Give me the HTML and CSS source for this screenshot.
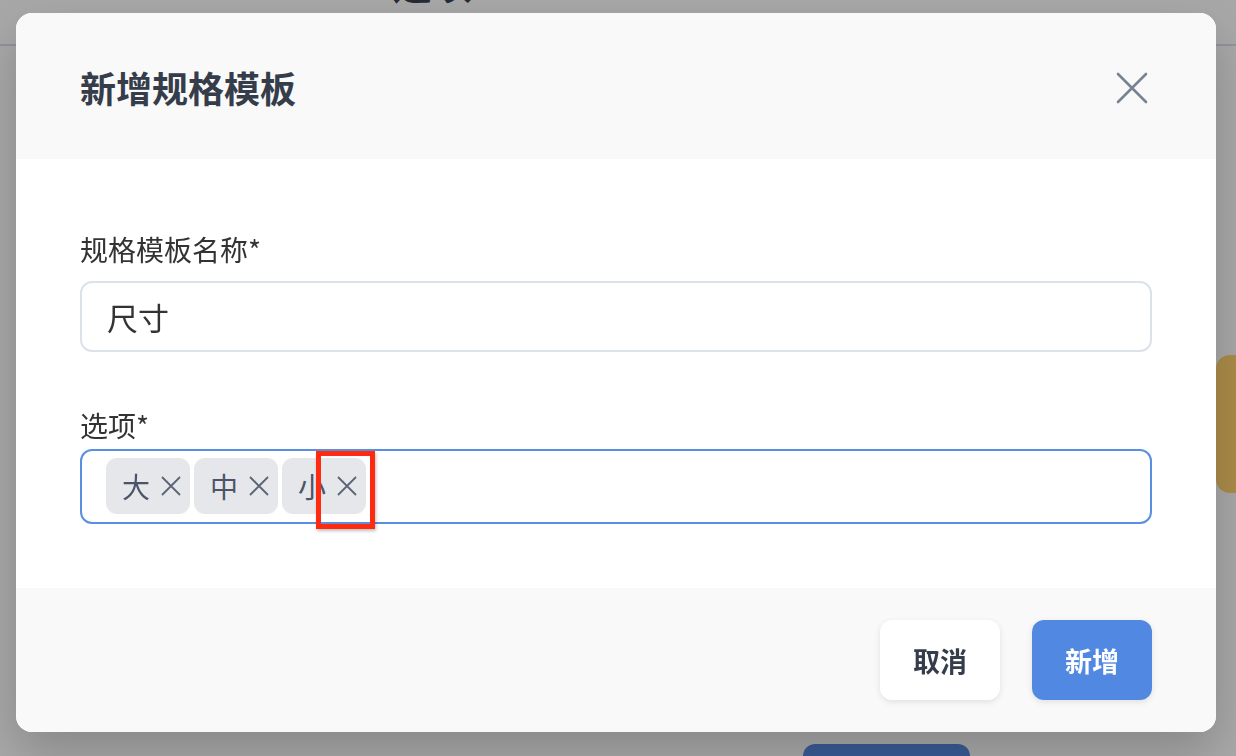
FILE: index.html
```html
<!DOCTYPE html>
<html lang="zh-CN">
<head>
  <meta charset="UTF-8" />
  <meta name="viewport" content="width=device-width, initial-scale=1" />
  <title>新增规格模板</title>
  <link rel="stylesheet" href="styles.css">
</head>
<body>

<div class="page">
  <header class="page-header">
    <h2 class="page-title">选项</h2>
  </header>
  <div class="page-side">
    <div class="side-tag"></div>
  </div>
  <div class="page-bottom">
    <div class="page-btn"></div>
  </div>
</div>

<div class="overlay">
  <div class="modal">
    <div class="modal-header">
      <h1>新增规格模板</h1>
      <button class="close-btn" aria-label="关闭">
        <svg width="32" height="32" viewBox="0 0 32 32" fill="none" stroke="currentColor" stroke-width="2.6" stroke-linecap="round">
          <path d="M2 2 L30 30 M30 2 L2 30" />
        </svg>
      </button>
    </div>

    <form class="modal-body">
      <label class="label-name" for="name">规格模板名称*</label>
      <input class="text-input" type="text" id="name" value="尺寸" />

      <label class="label-options">选项*</label>
      <div class="tag-input">
        <span class="chip">大<svg class="chip-x" width="20" height="20" viewBox="0 0 20 20"><path d="M1 1 L19 19 M19 1 L1 19" /></svg></span>
        <span class="chip">中<svg class="chip-x" width="20" height="20" viewBox="0 0 20 20"><path d="M1 1 L19 19 M19 1 L1 19" /></svg></span>
        <span class="chip">小<svg class="chip-x" width="20" height="20" viewBox="0 0 20 20"><path d="M1 1 L19 19 M19 1 L1 19" /></svg><span class="mark"></span></span>
      </div>
    </form>

    <div class="modal-footer">
      <button class="btn btn-cancel">取消</button>
      <button class="btn btn-primary">新增</button>
    </div>
  </div>
</div>

</body>
</html>
```

FILE: styles.css
```css
* {
  box-sizing: border-box;
}
body {
  margin: 0;
  font-family: "Noto Sans CJK SC", "Noto Sans", sans-serif;
  background: #fafafa;
  height: 756px;
  overflow: hidden;
}
.page {
  height: 756px;
  display: flex;
  flex-direction: column;
}
.page-header {
  height: 46px;
  border-bottom: 2px solid #d6dde5;
  overflow: hidden;
  padding-left: 392px;
}
.page-title {
  margin: -42px 0 0;
  font-size: 40px;
  line-height: 48px;
  color: #374151;
}
.page-side {
  display: flex;
  justify-content: flex-end;
  margin-top: 309px;
}
.side-tag {
  width: 40px;
  height: 138px;
  background: #ffd06c;
  border-radius: 14px 0 0 14px;
  margin-right: -20px;
}
.page-bottom {
  margin-top: auto;
  padding-left: 803px;
}
.page-btn {
  width: 167px;
  height: 12px;
  background: #5788dd;
  border-radius: 12px 12px 0 0;
}
.overlay {
  position: fixed;
  inset: 0;
  background: rgba(0, 0, 0, 0.33);
}
.modal {
  margin: 13px 0 0 16px;
  width: 1200px;
  height: 719px;
  background: #fff;
  border-radius: 16px;
  overflow: hidden;
  display: flex;
  flex-direction: column;
  box-shadow: 0 20px 50px rgba(0, 0, 0, 0.2);
}
.modal-header {
  height: 146px;
  background: #f9f9f9;
  display: flex;
  align-items: center;
  justify-content: space-between;
  padding: 0 68px 0 64px;
}
.modal-header h1 {
  margin: 2px 0 0;
  font-size: 36px;
  font-weight: bold;
  color: #353d4b;
}
.close-btn {
  background: none;
  border: none;
  padding: 0;
  color: #788293;
  display: flex;
  margin-top: 4px;
}
.modal-body {
  flex: 1;
  padding: 72px 64px 0;
  display: flex;
  flex-direction: column;
  margin: 0;
}
label {
  display: block;
  font-size: 28px;
  line-height: 36px;
  color: #333;
}
.text-input {
  margin-top: 14px;
  height: 71px;
  border: 2px solid #dbe2ea;
  border-radius: 12px;
  padding: 0 25px;
  font-family: inherit;
  font-size: 31px;
  color: #333;
  outline: none;
}
.label-options {
  margin-top: 55px;
}
.tag-input {
  margin-top: 6px;
  height: 75px;
  border: 2px solid #5a8ee2;
  border-radius: 12px;
  padding: 7px 24px;
  display: flex;
  gap: 4px;
}
.chip {
  position: relative;
  width: 84px;
  height: 56px;
  background: #e5e7eb;
  border-radius: 11px;
  display: flex;
  align-items: center;
  padding-left: 16px;
  font-size: 28px;
  color: #4b5567;
}
.chip-x {
  margin-left: 11px;
  fill: none;
  stroke: #5b6476;
  stroke-width: 1.8;
}
.mark {
  position: absolute;
  left: 34px;
  top: -7px;
  width: 59px;
  height: 78px;
  border: 5px solid #ff2a10;
  box-shadow: 1px 2px 3px rgba(0, 0, 0, 0.25);
}
.modal-footer {
  height: 144px;
  background: #f9f9f9;
  display: flex;
  justify-content: flex-end;
  align-items: center;
  gap: 32px;
  padding: 0 64px;
}
.btn {
  width: 120px;
  height: 80px;
  border: none;
  border-radius: 12px;
  font-family: inherit;
  font-size: 27px;
  font-weight: bold;
  cursor: pointer;
  box-shadow: 0 2px 6px rgba(0, 0, 0, 0.1);
}
.btn-cancel {
  background: #fff;
  color: #353d4b;
}
.btn-primary {
  background: #5088e2;
  color: #fff;
}
```
